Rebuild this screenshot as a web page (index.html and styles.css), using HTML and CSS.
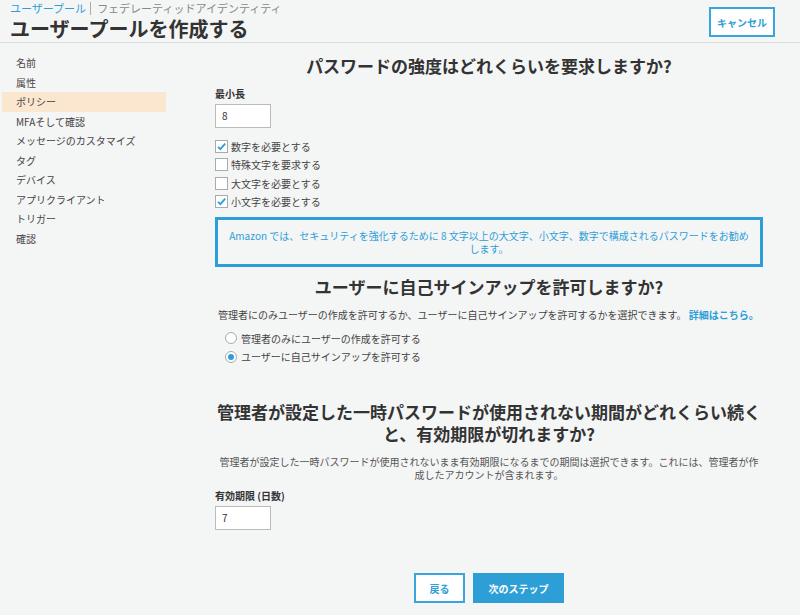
FILE: index.html
```html
<!DOCTYPE html>
<html lang="ja">
<head>
    <meta charset="UTF-8">
    <meta name="viewport" content="width=device-width, initial-scale=1.0">
    <title>ユーザープールを作成する</title>
    <link rel="stylesheet" href="styles.css">
</head>
<body>
    <div class="header">
        <div class="header-left">
            <div class="crumbs">
                <span class="crumb-active">ユーザープール</span>
                <span class="crumb-sep"></span>
                <span class="crumb">フェデレーティッドアイデンティティ</span>
            </div>
            <h1>ユーザープールを作成する</h1>
        </div>
        <button class="btn-outline cancel">キャンセル</button>
    </div>

    <div class="layout">
        <ul class="sidebar">
            <li>名前</li>
            <li>属性</li>
            <li class="active">ポリシー</li>
            <li>MFAそして確認</li>
            <li>メッセージのカスタマイズ</li>
            <li>タグ</li>
            <li>デバイス</li>
            <li>アプリクライアント</li>
            <li>トリガー</li>
            <li>確認</li>
        </ul>

        <div class="main">
            <h2 class="first">パスワードの強度はどれくらいを要求しますか?</h2>

            <div class="field-label">最小長</div>
            <div class="text-input">8</div>

            <div class="checks">
                <div class="check-row">
                    <span class="box"><svg width="11" height="11" viewBox="0 0 11 11"><path d="M2 5.8 L4.4 8.2 L9.2 2.6" fill="none" stroke="#2d9ed8" stroke-width="1.8"/></svg></span>
                    数字を必要とする
                </div>
                <div class="check-row"><span class="box"></span>特殊文字を要求する</div>
                <div class="check-row"><span class="box"></span>大文字を必要とする</div>
                <div class="check-row">
                    <span class="box"><svg width="11" height="11" viewBox="0 0 11 11"><path d="M2 5.8 L4.4 8.2 L9.2 2.6" fill="none" stroke="#2d9ed8" stroke-width="1.8"/></svg></span>
                    小文字を必要とする
                </div>
            </div>

            <div class="info">Amazon では、セキュリティを強化するために 8 文字以上の大文字、小文字、数字で構成されるパスワードをお勧め<span class="nowrap">します。</span></div>

            <h2>ユーザーに自己サインアップを許可しますか?</h2>
            <p class="desc">管理者にのみユーザーの作成を許可するか、ユーザーに自己サインアップを許可するかを選択できます。 <a href="#">詳細はこちら。</a></p>

            <div class="radios">
                <div class="radio-row"><span class="dot"></span>管理者のみにユーザーの作成を許可する</div>
                <div class="radio-row"><span class="dot on"></span>ユーザーに自己サインアップを許可する</div>
            </div>

            <h2 class="long">管理者が設定した一時パスワードが使用されない期間がどれくらい続くと、有効期限が切れますか?</h2>
            <p class="desc centered">管理者が設定した一時パスワードが使用されないまま有効期限になるまでの期間は選択できます。これには、管理者が作成したアカウントが含まれます。</p>

            <div class="field-label">有効期限 (日数)</div>
            <div class="text-input">7</div>

            <div class="actions">
                <button class="btn-outline back">戻る</button>
                <button class="btn-primary">次のステップ</button>
            </div>
        </div>
    </div>
</body>
</html>
```

FILE: styles.css
```css
body {
    margin: 0;
    background-color: #f4f5f5;
    color: #333;
    font-family: "Noto Sans CJK JP", "Noto Sans", sans-serif;
    font-size: 10px;
}

/* ヘッダー */
.header {
    display: flex;
    justify-content: space-between;
    align-items: flex-start;
    height: 42px;
    padding: 0 25px 0 10px;
    border-bottom: 1px solid #dcdede;
}

.crumbs {
    display: flex;
    align-items: center;
    height: 17px;
    line-height: 13px;
    font-size: 11px;
}

.crumb-active {
    color: #2d9ed8;
}

.crumb-sep {
    width: 1px;
    height: 13px;
    background-color: #aaa;
    margin: 0 6px 0 4px;
}

.crumb {
    color: #888;
}

h1 {
    margin: 2px 0 0;
    font-size: 20px;
    line-height: 20px;
    font-weight: bold;
    color: #333;
}

button {
    font-family: inherit;
    font-weight: bold;
    font-size: 10px;
    cursor: pointer;
}

.btn-outline {
    background-color: #fff;
    border: 2px solid #3aa5dc;
    color: #2d9ed8;
    height: 30px;
    padding: 0;
}

.cancel {
    margin-top: 7px;
    width: 66px;
}

.back {
    width: 51px;
}

.btn-primary {
    background-color: #2e9fd6;
    border: 2px solid #2e9fd6;
    color: #fff;
    height: 30px;
    width: 91px;
}

/* レイアウト */
.layout {
    display: flex;
}

.sidebar {
    list-style: none;
    margin: 0;
    padding: 10px 0 0 2px;
    width: 164px;
}

.sidebar li {
    height: 19.5px;
    line-height: 19.5px;
    padding-left: 14px;
    color: #444;
}

.sidebar li.active {
    background-color: #fbe6cf;
}

.main {
    width: 548px;
    margin-left: 49px;
}

h2 {
    margin: 0;
    text-align: center;
    font-size: 17px;
    line-height: 22px;
    font-weight: bold;
    color: #333;
}

h2.first {
    margin-top: 12px;
}

.field-label {
    font-weight: bold;
    margin-top: 10px;
    line-height: 14px;
}

.text-input {
    width: 42px;
    height: 22px;
    line-height: 22px;
    padding: 0 6px;
    margin-top: 3px;
    background-color: #fff;
    border: 1px solid #bbb;
    font-size: 10px;
}

.checks {
    margin-top: 9px;
}

.check-row, .radio-row {
    display: flex;
    align-items: center;
    height: 18.5px;
    color: #444;
}

.box {
    display: flex;
    align-items: center;
    justify-content: center;
    width: 11px;
    height: 11px;
    border: 1px solid #aaa;
    background-color: #fff;
    margin-right: 3px;
}

.info {
    margin-top: 6px;
    border: 3px solid #2d9ed8;
    padding: 9px 6px;
    text-align: center;
    color: #2d9ed8;
    line-height: 13px;
    height: 26px;
}

.nowrap {
    display: inline-block;
    white-space: nowrap;
}

.info + h2 {
    margin-top: 9px;
}

.desc {
    margin: 10px 0 0 3px;
    line-height: 13px;
    color: #444;
}

.desc a {
    color: #2d9ed8;
    text-decoration: none;
    font-weight: bold;
}

.desc.centered {
    margin: 10px 0 0;
    text-align: center;
    color: #555;
}

.radios {
    margin: 8px 0 0 10px;
}

.dot {
    width: 10px;
    height: 10px;
    border: 1px solid #aaa;
    border-radius: 50%;
    background-color: #fff;
    margin-right: 4px;
    position: relative;
}

.dot.on::after {
    content: "";
    position: absolute;
    top: 2px;
    left: 2px;
    width: 6px;
    height: 6px;
    border-radius: 50%;
    background-color: #2d9ed8;
}

h2.long {
    margin-top: 35px;
}

.desc.centered + .field-label {
    margin-top: 8px;
}

.actions {
    display: flex;
    justify-content: center;
    gap: 8px;
    margin-top: 43px;
}
```
